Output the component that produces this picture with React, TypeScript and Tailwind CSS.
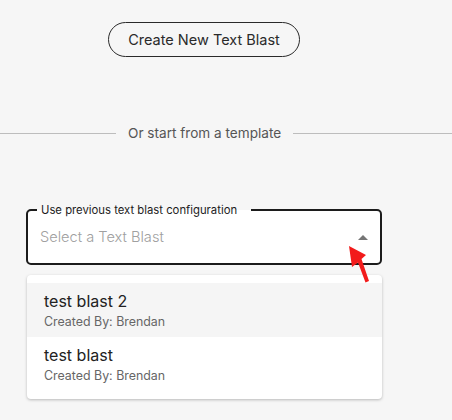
export default function App() {
  return (
    <div className="relative min-h-[420px] w-[452px] overflow-hidden bg-[#f6f6f6] font-['Inter',sans-serif]">
      <div className="flex w-[408px] flex-col items-center pt-[22px]">
        <button className="h-[35px] w-[192px] rounded-full border border-[#2a2a2a] text-[14.5px] text-[#2a2a2a]">
          Create New Text Blast
        </button>
      </div>

      {/* divider */}
      <div className="mt-[66px] flex h-5 items-center">
        <div className="h-px w-[116px] bg-[#bdbdbd]" />
        <span className="mx-3 text-[13.6px] text-[#555]">Or start from a template</span>
        <div className="h-px flex-1 bg-[#bdbdbd]" />
      </div>

      {/* select */}
      <div className="relative ml-[26px] mt-[67px] h-[55px] w-[356px] rounded-[5px] bg-white">
        <fieldset className="pointer-events-none absolute inset-x-0 bottom-0 top-[-8px] rounded-[5px] border-2 border-[#1c1c1c] pl-[9px]">
          <legend className="pl-1 pr-[14px] text-[11.3px] leading-[16px] text-[#1c1c1c]">
            Use previous text blast configuration
          </legend>
        </fieldset>
        <div className="flex h-full items-center justify-between pl-[14px] pr-[14px]">
          <span className="text-[14.6px] font-light text-[#a0a0a0]">Select a Text Blast</span>
          <svg width="10" height="5" viewBox="0 0 10 5">
            <path d="M0 5 L5 0 L10 5 Z" fill="#757575" />
          </svg>
        </div>
      </div>

      {/* menu */}
      <div className="ml-[27px] mt-[10px] w-[355px] rounded-[4px] bg-white py-2 shadow-[0_1px_3px_rgba(0,0,0,0.25)]">
        <div className="flex h-[54px] flex-col justify-center bg-[#f5f5f5] px-[17px]">
          <span className="text-[16px] leading-5 text-[#222]">test blast 2</span>
          <span className="mt-[3px] text-[12.4px] leading-4 text-[#666]">Created By: Brendan</span>
        </div>
        <div className="flex h-[54px] flex-col justify-center px-[17px]">
          <span className="text-[16px] leading-5 text-[#222]">test blast</span>
          <span className="mt-[3px] text-[12.4px] leading-4 text-[#666]">Created By: Brendan</span>
        </div>
      </div>

      {/* red pointer */}
      <svg className="absolute left-[340px] top-[240px]" width="40" height="48" viewBox="0 0 40 48">
        <path d="M9 6 L26 15 L21.5 19 L29 41 L25.5 42.5 L18 22.5 L12 27 Z" fill="#f21b1b" />
      </svg>
    </div>
  );
}
